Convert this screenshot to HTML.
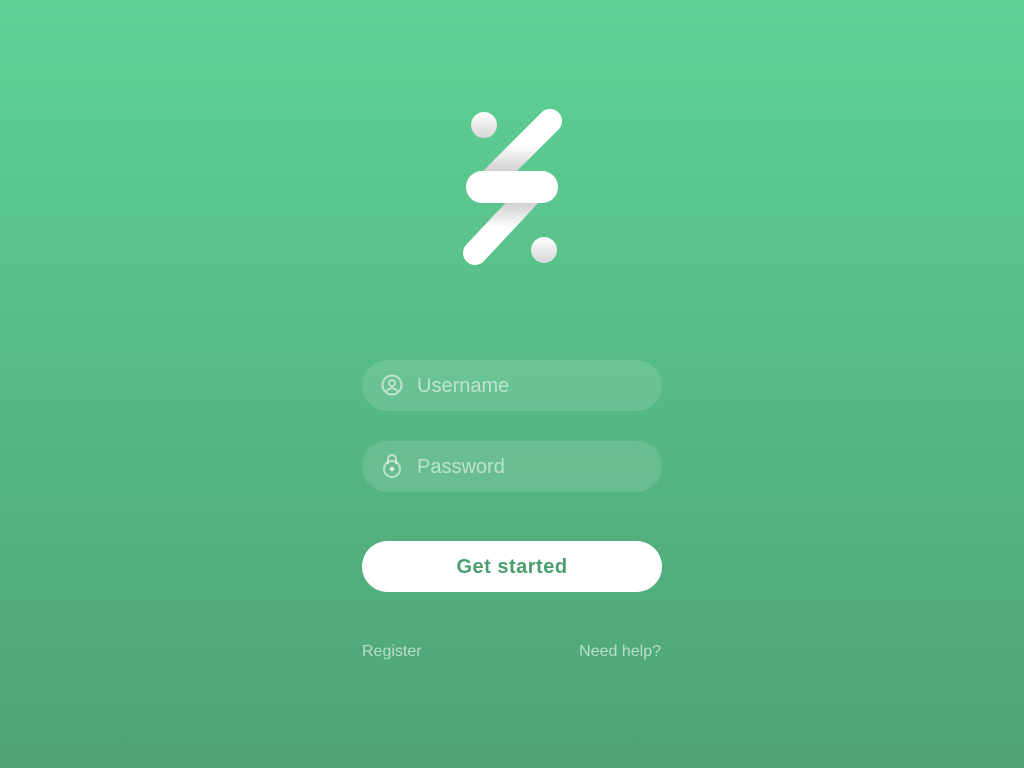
<!DOCTYPE html>
<html><head><meta charset="utf-8"><style>
html,body{margin:0;padding:0}
body{width:1024px;height:768px;overflow:hidden;background:linear-gradient(#5fd296,#4ea374);font-family:"Liberation Sans",sans-serif;position:relative}
.field{position:absolute;left:362px;width:300px;height:51px;border-radius:26px;background:rgba(255,255,255,0.12)}
.field span{position:absolute;left:55px;top:15px;font-size:20px;color:rgba(255,255,255,0.55)}
.field svg{position:absolute;left:19px;top:14px}
.btn{position:absolute;left:362px;top:541px;width:300px;height:51px;border-radius:26px;background:#fff;text-align:center;line-height:52px;font-size:20px;font-weight:bold;color:#4a9e6e;letter-spacing:0.5px}
.link{position:absolute;top:643px;font-size:16px;color:rgba(255,255,255,0.6)}
</style></head><body>
<svg style="position:absolute;left:0;top:0" width="1024" height="300">
<defs>
<linearGradient id="g1" x1="0" y1="0" x2="0" y2="1"><stop offset="0" stop-color="#fff"/><stop offset="1" stop-color="#d6d6d6"/></linearGradient>
<linearGradient id="gt" x1="0" y1="110" x2="0" y2="172" gradientUnits="userSpaceOnUse"><stop offset="0.55" stop-color="#fff"/><stop offset="1" stop-color="#cfcfcf"/></linearGradient>
<linearGradient id="gb" x1="0" y1="203" x2="0" y2="265" gradientUnits="userSpaceOnUse"><stop offset="0" stop-color="#cfcfcf"/><stop offset="0.4" stop-color="#fff"/></linearGradient>
</defs>
<line x1="550" y1="121" x2="488" y2="183" stroke="url(#gt)" stroke-width="24" stroke-linecap="round"/>
<line x1="533" y1="191" x2="475" y2="253" stroke="url(#gb)" stroke-width="24" stroke-linecap="round"/>
<rect x="466" y="171" width="92" height="32" rx="16" fill="#fff"/>
<circle cx="484" cy="125" r="13" fill="url(#g1)"/>
<circle cx="544" cy="250" r="13" fill="url(#g1)"/>
</svg>
<div class="field" style="top:360px">
<svg width="22" height="22" viewBox="0 0 22 22" fill="none" stroke="rgba(255,255,255,0.55)" stroke-width="2"><circle cx="11" cy="11" r="9.5"/><circle cx="11" cy="9" r="3"/><path d="M5.5 17.5c1.5-2.5 3.3-3.3 5.5-3.3s4 .8 5.5 3.3"/></svg>
<span>Username</span></div>
<div class="field" style="top:441px">
<svg width="22" height="26" viewBox="0 0 22 26" fill="none" stroke="rgba(255,255,255,0.55)" stroke-width="2" style="top:12px"><path d="M7 11V6a4 4 0 0 1 8 0v5"/><circle cx="11" cy="16" r="8"/><circle cx="11" cy="16" r="1.5" fill="rgba(255,255,255,0.55)"/></svg>
<span>Password</span></div>
<div class="btn">Get started</div>
<div class="link" style="left:362px">Register</div>
<div class="link" style="right:363px">Need help?</div>
</body></html>
